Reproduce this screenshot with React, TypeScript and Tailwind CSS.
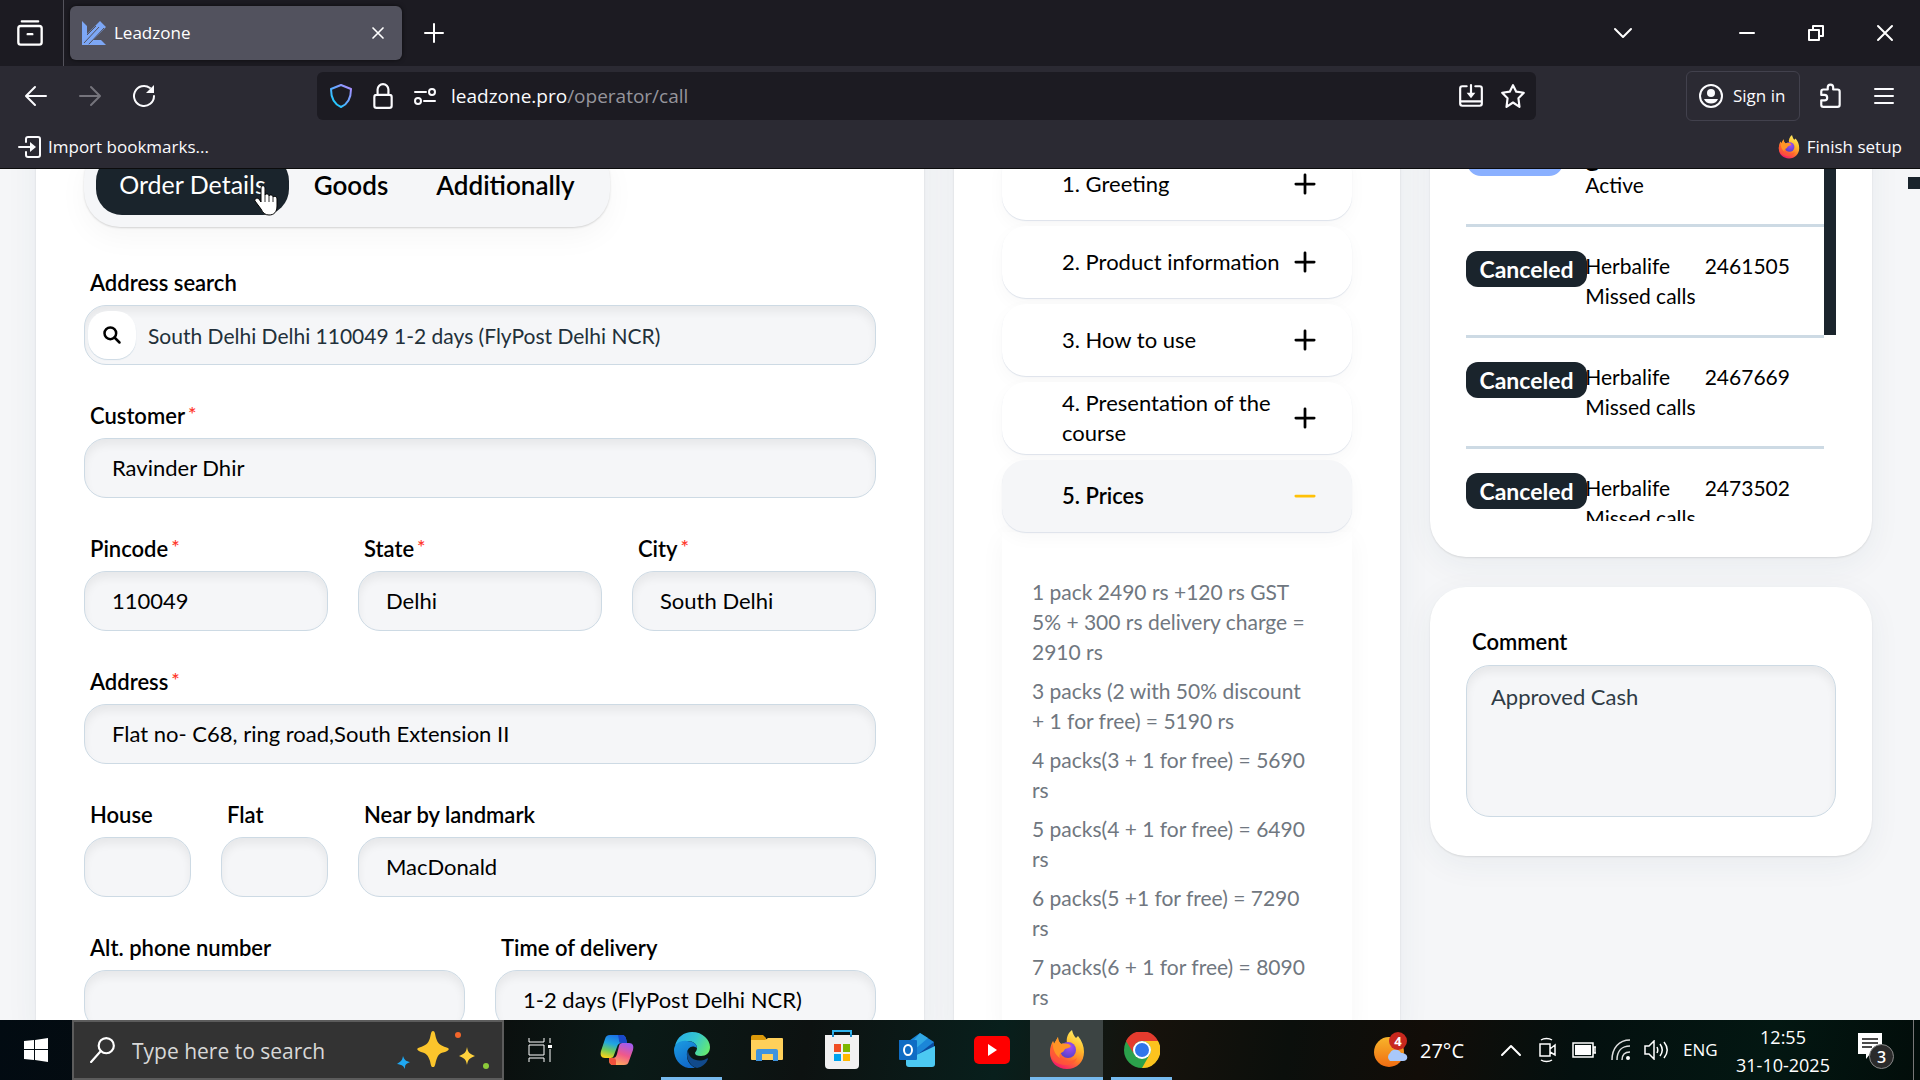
import type { ReactNode } from "react";

const UI = "font-['Open_Sans','Noto_Sans',sans-serif]";
const BODY = "font-['Lato','Open_Sans',sans-serif]";

/* ---------- icons ---------- */

function FirefoxLogo({ size, id }: { size: number; id: string }) {
  return (
    <svg width={size} height={size} viewBox="0 0 36 40" aria-hidden="true">
      <defs>
        <linearGradient id={`${id}-body`} x1="0.8" y1="0" x2="0.3" y2="1">
          <stop offset="0" stopColor="#fff36e" />
          <stop offset="0.35" stopColor="#ffc02e" />
          <stop offset="0.65" stopColor="#ff7a2a" />
          <stop offset="1" stopColor="#f5156c" />
        </linearGradient>
        <radialGradient id={`${id}-globe`} cx="0.6" cy="0.3" r="0.8">
          <stop offset="0" stopColor="#a64ef5" />
          <stop offset="1" stopColor="#4f3fc4" />
        </radialGradient>
      </defs>
      <path
        d="M23 0c1 4 2 6 4 8l2-2c4 5 6 10 6 16 0 10-7 17-17 17S1 32 1 23c0-5 1-9 3-12l1 3 4-7c0 3 1 5 3 7 2-1 4-1 6-1-1-5 1-10 5-13z"
        fill={`url(#${id}-body)`}
      />
      <path d="M1 22c0-4 2-8 4-9 0 5 2 10 5 13 4 5 12 7 18 2-2 5-6 7-11 7C8 35 1 30 1 22z" fill="#ff5a33" opacity=".7" />
      <circle cx="19" cy="20" r="8" fill={`url(#${id}-globe)`} />
      <path d="M4 11l1 3 4-7c0 3 1 5 3 7 4-1 8-1 10 2-1 2-4 2-6 3-1 2-2 3-4 4-2 1-2 3-1 5-5-3-8-10-7-17z" fill="#ff9426" />
    </svg>
  );
}

function LeadzoneLogo() {
  return (
    <svg width="24" height="24" viewBox="0 0 24 24" fill="#7da7f5" aria-hidden="true">
      <path d="M0 0l5 5v8L16 2l2-2 6 6L9 21l-3 3H0z" />
      <path d="M11 19h8l5 5H6z" />
      <path d="M2 22L17 6M7 23L22 7M5 14l9-9" stroke="#52525e" strokeWidth="1" fill="none" />
    </svg>
  );
}

function Stroke({ size = 24, w = 2, className, children }: { size?: number; w?: number; className?: string; children: ReactNode }) {
  return (
    <svg
      width={size}
      height={size}
      viewBox="0 0 24 24"
      fill="none"
      stroke="currentColor"
      strokeWidth={w}
      strokeLinecap="round"
      strokeLinejoin="round"
      className={className}
      aria-hidden="true"
    >
      {children}
    </svg>
  );
}

function HandCursor() {
  return (
    <svg width="24" height="32" viewBox="0 0 24 32" className="absolute left-[158px] top-[30px]" aria-hidden="true">
      <path
        d="M7 3c0-3 4-3 4 0v7c1-2 4-1 4 1 1-2 4-1 4 1 1-1 4-1 4 2v7c0 6-3 9-8 9-4 0-6-2-8-6l-6-8c-1-2 2-4 4-2l2 3z"
        fill="#fff"
        stroke="#000"
        strokeWidth="1"
      />
      <path d="M11 10v7M15 11v6M19 12v5" stroke="#333" strokeWidth="1" />
    </svg>
  );
}

/* ---------- browser chrome ---------- */

function TitleBar() {
  return (
    <div className="flex h-[66px] shrink-0 items-center bg-[#1c1b22]">
      <button aria-label="View tabs" className="flex h-full w-16 items-center justify-center border-r border-[#54535c] pr-1">
        <Stroke size={28} w={2}>
          <path d="M5 2h14M4 6h16a2 2 0 012 2v12a2 2 0 01-2 2H4a2 2 0 01-2-2V8a2 2 0 012-2zM10 13h4" />
        </Stroke>
      </button>
      <div className="ml-[6px] flex h-[54px] w-[332px] items-center rounded-md bg-[#52525e] pl-3 shadow-[0_0_4px_rgba(0,0,0,0.6)]">
        <LeadzoneLogo />
        <span className="ml-2 flex-1 text-[17px]">Leadzone</span>
        <button aria-label="Close tab" className="mr-3 flex h-6 w-6 items-center justify-center">
          <Stroke size={20} w={2}><path d="M6 6l12 12M18 6L6 18" /></Stroke>
        </button>
      </div>
      <button aria-label="New tab" className="ml-5 p-0">
        <Stroke size={24} w={2}><path d="M12 3v18M3 12h18" /></Stroke>
      </button>
      <div className="ml-auto flex items-center">
        <button aria-label="List all tabs" className="mr-[100px]"><Stroke size={24} w={2}><path d="M4 8l8 8 8-8" /></Stroke></button>
        <button aria-label="Minimize" className="mr-[45px]"><Stroke size={24} w={2}><path d="M5 12h14" /></Stroke></button>
        <button aria-label="Restore" className="mr-[45px]">
          <Stroke size={24} w={2}><path d="M5 9h10v10H5zM9 9V5h10v10h-4" /></Stroke>
        </button>
        <button aria-label="Close" className="mr-[23px]"><Stroke size={24} w={2}><path d="M5 5l14 14M19 5L5 19" /></Stroke></button>
      </div>
    </div>
  );
}

function NavBar() {
  return (
    <div className="flex h-[60px] shrink-0 items-center bg-[#2b2a33] text-[#fbfbfe]">
      <div className="flex w-[317px] items-center gap-[30px] pl-6">
        <button aria-label="Back"><Stroke><path d="M22 12H3M11 3l-9 9 9 9" /></Stroke></button>
        <button aria-label="Forward" className="text-[#75747c]"><Stroke><path d="M2 12h19M13 3l9 9-9 9" /></Stroke></button>
        <button aria-label="Reload">
          <Stroke>
            <path d="M22 12a10 10 0 11-4-8" />
            <path d="M22 1v8h-8z" fill="currentColor" stroke="none" />
          </Stroke>
        </button>
      </div>
      <div className="flex h-12 w-[1219px] items-center rounded-md bg-[#1c1b22] pl-3">
        <svg width="24" height="26" viewBox="0 0 24 26" fill="none" aria-hidden="true">
          <defs>
            <linearGradient id="shield" x1="1" y1="0" x2="0" y2="1">
              <stop offset="0" stopColor="#b58cff" />
              <stop offset="0.5" stopColor="#5fa8ff" />
              <stop offset="1" stopColor="#00ddff" />
            </linearGradient>
          </defs>
          <path d="M12 2l10 4c0 9-3 15-10 18C5 21 2 15 2 6z" stroke="url(#shield)" strokeWidth="2" strokeLinejoin="round" />
        </svg>
        <Stroke size={26} className="ml-[17px]">
          <path d="M6 11h12a2 2 0 012 2v8a2 2 0 01-2 2H6a2 2 0 01-2-2v-8a2 2 0 012-2zM7 11V6a5 5 0 0110 0v5" />
        </Stroke>
        <Stroke size={24} className="ml-[17px]">
          <path d="M2 8h11M11 17h11" />
          <circle cx="19" cy="8" r="3" />
          <circle cx="5" cy="17" r="3" />
        </Stroke>
        <div className="relative ml-[14px] flex h-full flex-1 items-center pt-px text-[19px]">
          <input aria-label="Address" className="absolute inset-0 w-full bg-transparent outline-none" />
          <span>leadzone.pro</span>
          <span className="text-[#96959c]">/operator/call</span>
        </div>
        <button aria-label="Install app" className="mr-4">
          <Stroke size={26}>
            <path d="M8 3H4a2 2 0 00-2 2v14a2 2 0 002 2h16a2 2 0 002-2V5a2 2 0 00-2-2h-4M2 17h20M12 2v9" />
            <path d="M8 9h8l-4 5z" fill="currentColor" stroke="none" />
          </Stroke>
        </button>
        <button aria-label="Bookmark page" className="mr-[10px]">
          <Stroke size={26}><path d="M12 2l3 6 7 1-5 5 1 8-6-4-6 4 1-8-5-5 7-1z" /></Stroke>
        </button>
      </div>
      <div className="ml-auto flex items-center">
        <button className="flex h-[50px] w-[114px] items-center gap-[10px] rounded-md border border-[#42414d] pl-3 text-[17px]">
          <svg width="24" height="24" viewBox="0 0 24 24" aria-hidden="true">
            <circle cx="12" cy="12" r="11" fill="none" stroke="#fbfbfe" strokeWidth="2" />
            <circle cx="12" cy="9" r="4" fill="#fbfbfe" />
            <path d="M5 15h14c-2 6-12 6-14 0z" fill="#fbfbfe" />
          </svg>
          Sign in
        </button>
        <button aria-label="Extensions" className="ml-[18px]">
          <Stroke size={26}>
            <path d="M3 10V8a2 2 0 012-2h4V4a2 2 0 015 0v2h4a2 2 0 012 2v12a2 2 0 01-2 2H5a2 2 0 01-2-2v-4h3a2 2 0 000-5H3z" />
          </Stroke>
        </button>
        <button aria-label="Menu" className="ml-[28px] mr-6">
          <Stroke size={24}><path d="M3 5h18M3 12h18M3 19h18" /></Stroke>
        </button>
      </div>
    </div>
  );
}

function BookmarkBar() {
  return (
    <div className="flex h-[43px] shrink-0 items-center justify-between border-b border-[#0c0c0d] bg-[#2b2a33] px-[18px] text-[17px] text-[#fbfbfe]">
      <button className="flex items-center gap-[6px]">
        <Stroke size={24}>
          <path d="M8 7V4a2 2 0 012-2h10a2 2 0 012 2v16a2 2 0 01-2 2H10a2 2 0 01-2-2v-3M1 12h12" />
          <path d="M12 7l6 5-6 5z" fill="currentColor" stroke="none" />
        </Stroke>
        Import bookmarks...
      </button>
      <button className="flex items-center gap-[6px]">
        <FirefoxLogo size={24} id="ff-small" />
        Finish setup
      </button>
    </div>
  );
}

/* ---------- page ---------- */

const CARD = "bg-white shadow-[0_1px_2px_rgba(0,0,0,0.1),0_8px_32px_rgba(40,60,90,0.06)]";
const FIELD = "w-full border border-[#cddae4] bg-[#f5f6f8] outline-none shadow-[inset_0_6px_9px_rgba(0,0,0,0.06)]";

function Field({ id, label, value, required, span }: { id: string; label: string; value: string; required?: boolean; span: string }) {
  return (
    <div className={span}>
      <label htmlFor={id} className="block h-[30px] pl-[6px] text-[22px] leading-[29px] font-semibold">
        {label}
        {required && <span className="ml-[3px] align-top text-[20px] leading-6 text-[#ff3b2f]">*</span>}
      </label>
      <input id={id} defaultValue={value} className={`${FIELD} mt-[7px] h-[60px] rounded-[22px] px-[27px] pb-px text-[22px]`} />
    </div>
  );
}

function OrderForm() {
  return (
    <section className={`${CARD} px-12 pt-[47px]`}>
      <div className="flex w-[526px] rounded-[36px] bg-[#f5f6f8] p-3 shadow-[0_1px_2px_rgba(0,0,0,0.15),0_10px_30px_rgba(0,0,0,0.04)]">
        <button className="relative h-[60px] w-[193px] rounded-[26px] bg-[#1a242c] text-[25px] text-white">
          Order Details
          <HandCursor />
        </button>
        <button className="h-[60px] w-[124px] text-[26px] font-semibold">Goods</button>
        <button className="h-[60px] w-[185px] text-[26px] font-semibold">Additionally</button>
      </div>

      <form className="mt-[41px] grid grid-cols-6 gap-x-[30px] gap-y-9">
        <div className="col-span-6">
          <label htmlFor="search" className="block h-[30px] pl-[6px] text-[22px] leading-[30px] font-semibold">Address search</label>
          <div className="relative mt-[7px]">
            <input
              id="search"
              defaultValue="South Delhi Delhi 110049 1-2 days (FlyPost Delhi NCR)"
              className={`${FIELD} h-[60px] rounded-[22px] pl-[63px] text-[21px] text-[#22303a]`}
            />
            <button type="button" aria-label="Search" className="absolute left-[4px] top-[6px] flex h-12 w-12 items-center justify-center rounded-[20px] bg-white shadow-[0_1px_1px_#cddae4]">
              <Stroke size={20} w={3}>
                <circle cx="10" cy="10" r="7" />
                <path d="M15 15l6 6" />
              </Stroke>
            </button>
          </div>
        </div>
        <Field id="customer" label="Customer" value="Ravinder Dhir" required span="col-span-6" />
        <Field id="pincode" label="Pincode" value="110049" required span="col-span-2" />
        <Field id="state" label="State" value="Delhi" required span="col-span-2" />
        <Field id="city" label="City" value="South Delhi" required span="col-span-2" />
        <Field id="address" label="Address" value="Flat no- C68, ring road,South Extension II" required span="col-span-6" />
        <Field id="house" label="House" value="" span="col-span-1" />
        <Field id="flat" label="Flat" value="" span="col-span-1" />
        <Field id="landmark" label="Near by landmark" value="MacDonald" span="col-span-4" />
        <Field id="alt" label="Alt. phone number" value="" span="col-span-3" />
        <Field id="time" label="Time of delivery" value="1-2 days (FlyPost Delhi NCR)" span="col-span-3" />
      </form>
    </section>
  );
}

const script = ["1. Greeting", "2. Product information", "3. How to use", "4. Presentation of the course", "5. Prices"];

const prices = [
  "1 pack 2490 rs +120 rs GST 5% + 300 rs delivery charge = 2910 rs",
  "3 packs (2 with 50% discount + 1 for free) = 5190 rs",
  "4 packs(3 + 1 for free) = 5690 rs",
  "5 packs(4 + 1 for free) = 6490 rs",
  "6 packs(5 +1 for free) = 7290 rs",
  "7 packs(6 + 1 for free) = 8090 rs",
];

function ScriptPanel() {
  return (
    <section className={`${CARD} px-12 pt-[52px]`}>
      <div className="flex flex-col gap-[6px]">
        {script.map((title) => {
          const open = title === "5. Prices";
          return (
            <button
              key={title}
              aria-expanded={open}
              className={`flex h-[72px] items-center justify-between rounded-[24px] pl-[60px] pr-[36px] text-left text-[22px] leading-[30px] shadow-[0_1px_1px_#dde2ea,0_6px_18px_rgba(0,0,0,0.03)] ${open ? "bg-[#f5f6f8] font-semibold" : "bg-white"}`}
            >
              <span className="max-w-[225px]">{title}</span>
              <Stroke size={22} w={3} className={open ? "shrink-0 text-[#ffc107]" : "shrink-0"}>
                <path d={open ? "M2 12h20" : "M2 12h20M12 2v20"} />
              </Stroke>
            </button>
          );
        })}
      </div>
      <div className="h-[500px] px-[30px] pt-[45px] text-[21px] leading-[30px] text-[#707780] shadow-[0_6px_24px_rgba(0,0,0,0.04)]">
        {prices.map((line) => (
          <p key={line} className="mb-[9px] max-w-[280px] last:mb-0">{line}</p>
        ))}
      </div>
    </section>
  );
}

const calls = ["2461505", "2467669", "2473502"];

function SidePanels() {
  return (
    <div className="flex flex-col gap-[30px]">
      <section className={`${CARD} rounded-b-[36px] px-9 pb-9`}>
        <div className="flex h-[425px] items-start overflow-hidden">
          <ul className="flex-1 text-[21px] leading-[30px]">
            <li className="grid h-[131px] grid-cols-3 border-b-[3px] border-[#cddae4] pt-11">
              <span className="ml-px h-9 w-24 rounded-[14px] bg-[#8ab0ff]" />
              <span className="col-span-2"><b className="block h-[30px] text-[28px]">g</b>Active</span>
            </li>
            {calls.map((id) => (
              <li key={id} className="grid h-[111px] grid-cols-3 border-b-[3px] border-[#cddae4] pt-6">
                <span className="flex h-9 w-[121px] items-center justify-center rounded-xl bg-[#1a242c] text-[23px] font-bold text-white">Canceled</span>
                <span className="z-10 whitespace-nowrap">Herbalife<br />Missed calls</span>
                <span>{id}</span>
              </li>
            ))}
          </ul>
          <div className="h-[239px] w-3 bg-[#1a242c]" />
        </div>
      </section>
      <section className={`${CARD} rounded-[36px] px-9 pb-[39px] pt-10`}>
        <label htmlFor="comment" className="block pl-[6px] text-[22px] leading-[30px] font-semibold">Comment</label>
        <textarea
          id="comment"
          defaultValue="Approved Cash"
          className={`${FIELD} mt-2 block h-[152px] resize-none rounded-[24px] px-6 py-4 text-[22px] leading-[30px] text-[#2f3b45]`}
        />
      </section>
    </div>
  );
}

/* ---------- taskbar ---------- */

function EdgeIcon() {
  return (
    <svg width="36" height="36" viewBox="0 0 36 36" aria-hidden="true">
      <defs>
        <linearGradient id="edge-top" x1="0" y1="0.3" x2="1" y2="0.7">
          <stop offset="0" stopColor="#28aee8" />
          <stop offset="0.5" stopColor="#35c6cf" />
          <stop offset="1" stopColor="#66eb6e" />
        </linearGradient>
        <linearGradient id="edge-left" x1="0" y1="0" x2="0.5" y2="1">
          <stop offset="0" stopColor="#1b9de2" />
          <stop offset="1" stopColor="#1169c9" />
        </linearGradient>
      </defs>
      <path d="M1 14C3 5 10 0 18 0c11 0 18 8 18 15 0 6-4 9-9 9-4 0-6-1-6-3 0-1 2-2 2-5 0-4-4-7-9-7-6 0-11 3-13 5z" fill="url(#edge-top)" />
      <path d="M0 18c0-6 6-10 13-9 6 0 10 3 10 7-5-4-11 0-10 8 0 5 3 9 8 12C9 38 0 29 0 18z" fill="url(#edge-left)" />
      <path d="M14 18c-3 6 1 16 9 18 5-1 9-4 11-9 0-1-1-1-2 0-8 4-18 0-18-9z" fill="#114a8b" />
    </svg>
  );
}

function CopilotIcon() {
  return (
    <svg width="34" height="32" viewBox="0 0 34 32" aria-hidden="true">
      <defs>
        <linearGradient id="cp-a" x1="0.6" y1="0" x2="0.3" y2="1">
          <stop offset="0" stopColor="#1b6fe8" />
          <stop offset="0.4" stopColor="#22a7e0" />
          <stop offset="0.7" stopColor="#6fc95a" />
          <stop offset="1" stopColor="#f6d21c" />
        </linearGradient>
        <linearGradient id="cp-b" x1="0.7" y1="0" x2="0.3" y2="1">
          <stop offset="0" stopColor="#a25bef" />
          <stop offset="0.5" stopColor="#f0598a" />
          <stop offset="1" stopColor="#ffb05a" />
        </linearGradient>
      </defs>
      <path d="M10 1h12c3 0 4 2 5 8h-5c-3 0-4 1-5 4l-3 8c-1 3-2 3-5 3H5c-4 0-5-3-4-7L5 5c1-3 2-4 5-4z" fill="url(#cp-a)" />
      <path d="M18 1h4c3 0 4 2 5 8h-5c-2 0-3 0-3-3z" fill="#1a49c9" />
      <path d="M24 31H13c-3 0-4-2-4-7h3c3 0 4-1 5-4l2-8c1-3 2-3 5-3h5c4 0 5 3 4 7l-4 11c-1 3-2 4-5 4z" fill="url(#cp-b)" />
      <path d="M16 31h-3c-3 0-4-2-4-7h4c2 0 3 1 3 3z" fill="#f0503c" />
    </svg>
  );
}

function ExplorerIcon() {
  return (
    <svg width="32" height="30" viewBox="0 0 32 30" aria-hidden="true">
      <path d="M0 2a2 2 0 012-2h10l3 3v4H0z" fill="#dd9a0a" />
      <path d="M0 5h14l3-2h14a1 1 0 011 1v20a1 1 0 01-1 1H1a1 1 0 01-1-1z" fill="#ffd05a" />
      <path d="M5 16a2 2 0 012-2h18a2 2 0 012 2v10h-5v-7H11v7H5z" fill="#3f93dc" />
    </svg>
  );
}

function StoreIcon() {
  return (
    <svg width="36" height="40" viewBox="0 0 36 40" aria-hidden="true">
      <path d="M9 7V1h18v6" fill="none" stroke="#2fb4ee" strokeWidth="2" />
      <path d="M1 5h34v30a4 4 0 01-4 4H5a4 4 0 01-4-4z" fill="#f1f1f1" />
      <path d="M9 7V4M27 7V4" stroke="#1a8fd0" strokeWidth="2" />
      <path d="M10 14h7v8h-7z" fill="#f04e23" />
      <path d="M19 14h7v8h-7z" fill="#7db700" />
      <path d="M10 24h7v7h-7z" fill="#00a3ee" />
      <path d="M19 24h7v7h-7z" fill="#ffb800" />
    </svg>
  );
}

function OutlookIcon() {
  return (
    <svg width="36" height="34" viewBox="0 0 36 34" aria-hidden="true">
      <path d="M7 10L21 0l14 9v3L18 24H7z" fill="#1b86d8" />
      <path d="M21 0l8 5-14 12-4-5z" fill="#3ab6ea" opacity=".7" />
      <path d="M18 22L35 9v6L22 26z" fill="#0b4a9e" />
      <path d="M7 27l29-14v18a3 3 0 01-3 3H10a3 3 0 01-3-3z" fill="#4cc9f2" />
      <path d="M0 7h17a1 1 0 011 1v18a1 1 0 01-1 1H1a1 1 0 01-1-1z" fill="#0f6cc4" />
      <ellipse cx="9" cy="17" rx="4" ry="5" fill="none" stroke="#fff" strokeWidth="2" />
    </svg>
  );
}

function YoutubeIcon() {
  return (
    <svg width="36" height="28" viewBox="0 0 36 28" aria-hidden="true">
      <rect width="36" height="28" rx="5" fill="#f00" />
      <path d="M14 8l9 6-9 6z" fill="#fff" />
    </svg>
  );
}

function ChromeIcon() {
  return (
    <svg width="36" height="36" viewBox="0 0 36 36" aria-hidden="true">
      <circle cx="18" cy="18" r="18" fill="#2ba14b" />
      <path d="M2 9a18 18 0 0132 0H18a9 9 0 00-8 13z" fill="#e33b2e" />
      <path d="M34 9a18 18 0 01-16 27l8-14a9 9 0 00-8-13z" fill="#fcc31e" />
      <circle cx="18" cy="18" r="9" fill="#fff" />
      <circle cx="18" cy="18" r="7" fill="#2f75ea" />
    </svg>
  );
}

const apps: { name: string; icon: ReactNode; state?: "open" | "active" }[] = [
  { name: "Copilot", icon: <CopilotIcon /> },
  { name: "Edge", icon: <EdgeIcon />, state: "open" },
  { name: "File Explorer", icon: <ExplorerIcon /> },
  { name: "Store", icon: <StoreIcon /> },
  { name: "Outlook", icon: <OutlookIcon /> },
  { name: "YouTube", icon: <YoutubeIcon /> },
  { name: "Firefox", icon: <FirefoxLogo size={40} id="ff-task" />, state: "active" },
  { name: "Chrome", icon: <ChromeIcon />, state: "open" },
];

function Taskbar() {
  return (
    <footer className={`flex h-[60px] shrink-0 items-stretch bg-[linear-gradient(100deg,#020b12_0%,#0b0e0d_25%,#0a1a17_33%,#0d1211_42%,#081f1c_52%,#16120c_60%,#0b0f0c_67%,#120d08_74%,#04100f_82%,#031712_92%,#020d0a_100%)] text-white ${UI}`}>
      <button aria-label="Start" className="flex w-[72px] items-center justify-center">
        <svg width="24" height="24" viewBox="0 0 24 24" fill="#fff" aria-hidden="true">
          <path d="M0 3l10-1v9H0zM11 2l13-2v11H11zM0 12h10v10L0 21zM11 12h13v12l-13-2z" />
        </svg>
      </button>
      <label className="flex w-[432px] items-center border-2 border-[#5c5c5c] bg-[#333] pl-4">
        <Stroke size={26} w={2}>
          <circle cx="15" cy="8" r="7" />
          <path d="M10 13L1 23" />
        </Stroke>
        <input
          aria-label="Search"
          placeholder="Type here to search"
          className="ml-4 w-[240px] bg-transparent pt-1 text-[21px] text-[#d8d8d8] outline-none placeholder:text-[#d8d8d8]"
        />
        <svg width="92" height="38" viewBox="0 0 92 38" className="ml-auto mr-[13px]" aria-hidden="true">
          <path d="M36 0c2 0 2 3 3 7 2 6 4 7 9 9 5 1 5 3 0 5-6 1-7 3-9 9-1 4-1 6-3 6s-2-2-3-6c-2-6-4-8-9-9-5-2-5-4 0-5 5-2 7-3 9-9 1-4 1-7 3-7z" fill="#fbc52c" />
          <path d="M70 16c1 6 3 7 8 9-5 2-7 3-8 9-1-6-3-7-8-9 5-2 7-3 8-9z" fill="#ffd23d" />
          <path d="M6 25c2 5 3 5 7 6-4 2-5 2-5 7-2-4-3-4-8-5 4-3 5-3 6-8z" fill="#1fa8f2" />
          <circle cx="61" cy="4" r="3" fill="#f2652a" />
          <circle cx="89" cy="35" r="3" fill="#8ccb3a" />
        </svg>
      </label>
      <button aria-label="Task view" className="mr-[5px] flex w-[71px] items-center justify-center">
        <svg width="24" height="24" viewBox="0 0 24 24" fill="none" stroke="#fff" strokeWidth="1" aria-hidden="true">
          <path d="M1 0v4h15V0M1 24v-4h15v4M1 7h15v10H1zM22 0v5M22 11v13" />
          <path d="M20 7h4v3h-4z" fill="#fff" stroke="none" />
        </svg>
      </button>
      <div className="flex gap-[2px]">
        {apps.map((app) => (
          <button
            key={app.name}
            aria-label={app.name}
            className={`flex w-[73px] flex-col items-center ${app.state === "active" ? "bg-[#3c4443]" : ""}`}
          >
            <span className="flex flex-1 items-center pt-[3px]">{app.icon}</span>
            <span className={`h-[3px] ${app.state ? "bg-[#76b9ed]" : ""} ${app.state === "active" ? "w-full" : "w-[61px]"}`} />
          </button>
        ))}
      </div>

      <div className="ml-auto flex items-center">
        <svg width="34" height="36" viewBox="0 0 34 36" aria-hidden="true">
          <defs>
            <linearGradient id="sun" x1="0" y1="0" x2="0" y2="1">
              <stop offset="0" stopColor="#f8b52a" />
              <stop offset="1" stopColor="#f06c12" />
            </linearGradient>
          </defs>
          <circle cx="15" cy="20" r="15" fill="url(#sun)" />
          <path d="M16 29a5 5 0 010-8c3-5 9-4 11 0 8 0 8 8 2 8z" fill="#a9c8fa" />
          <circle cx="24" cy="9" r="9" fill="#c8281e" />
          <text x="24" y="14" textAnchor="middle" fontSize="13" fontWeight="700" fill="#fff">4</text>
        </svg>
        <span className="ml-3 w-[44px] pt-[2px] text-[20px] whitespace-nowrap">27°C</span>
        <Stroke size={24} w={2} className="ml-[35px]"><path d="M3 17l9-9 9 9" /></Stroke>
        <svg width="20" height="26" viewBox="0 0 20 26" fill="none" stroke="#fff" strokeWidth="1.500" className="ml-[15px]" aria-hidden="true">
          <path d="M3 3c3-2 8-2 11 0M3 23c3 2 8 2 11 0M2 7h10v12H2zM12 12l5-4v10l-5-3" />
        </svg>
        <svg width="24" height="16" viewBox="0 0 24 16" className="ml-[14px]" aria-hidden="true">
          <path d="M1 1h20v14H1zM22 5h2v6h-2z" fill="none" stroke="#fff" strokeWidth="1.500" />
          <path d="M3 3h16v10H3z" fill="#fff" />
        </svg>
        <svg width="20" height="22" viewBox="0 0 20 22" fill="none" stroke="#ddd" strokeWidth="1.500" className="ml-[15px]" aria-hidden="true">
          <path d="M1 21C1 9 8 1 19 1M6 21c0-9 5-14 13-14M11 21c0-5 3-8 8-8" />
          <circle cx="17" cy="19" r="2" fill="#fff" stroke="none" />
        </svg>
        <svg width="24" height="20" viewBox="0 0 24 20" fill="none" stroke="#fff" strokeWidth="1.500" className="ml-[13px]" aria-hidden="true">
          <path d="M1 6h4l5-5v18l-5-5H1zM13 7c1 2 1 4 0 6M16 4c3 4 3 8 0 12M20 2c4 5 4 11 0 16" />
        </svg>
        <span className="ml-[15px] w-[35px] text-[17px]">ENG</span>
        <time className="ml-3 w-[106px] pt-[2px] text-center text-[18px] leading-7">
          12:55<br />31-10-2025
        </time>
        <div className="relative ml-[21px] mr-[28px] mt-[-6px] h-7 w-[28px]">
          <svg width="26" height="26" viewBox="0 0 26 26" aria-hidden="true">
            <path d="M1 0h24v21H13l-4 5v-5H1z" fill="#fff" />
            <path d="M5 6h16M5 10h16M5 14h10" stroke="#111" strokeWidth="1.500" />
          </svg>
          <span className="absolute left-[12px] top-[11px] flex h-[25px] w-[25px] items-center justify-center rounded-full border border-[#888] bg-[#2b2b2b] text-[16px] font-semibold">3</span>
        </div>
        <div className="mr-[6px] h-[60px] w-px bg-[#777]" />
      </div>
    </footer>
  );
}

export default function App() {
  return (
    <div className="flex h-screen flex-col overflow-hidden">
      <header className={`flex flex-col text-white ${UI}`}>
        <TitleBar />
        <NavBar />
        <BookmarkBar />
      </header>
      <main className={`flex min-h-0 flex-1 overflow-hidden bg-[#f5f6f8] text-black ${BODY}`}>
        <div className="-mt-[73px] grid flex-1 grid-cols-[888fr_446fr_442fr] items-stretch gap-x-[30px] self-start px-9">
          <OrderForm />
          <ScriptPanel />
          <SidePanels />
        </div>
        <div className="w-3 pt-2">
          <div className="h-3 bg-[#1a242c]" />
        </div>
      </main>
      <Taskbar />
    </div>
  );
}
